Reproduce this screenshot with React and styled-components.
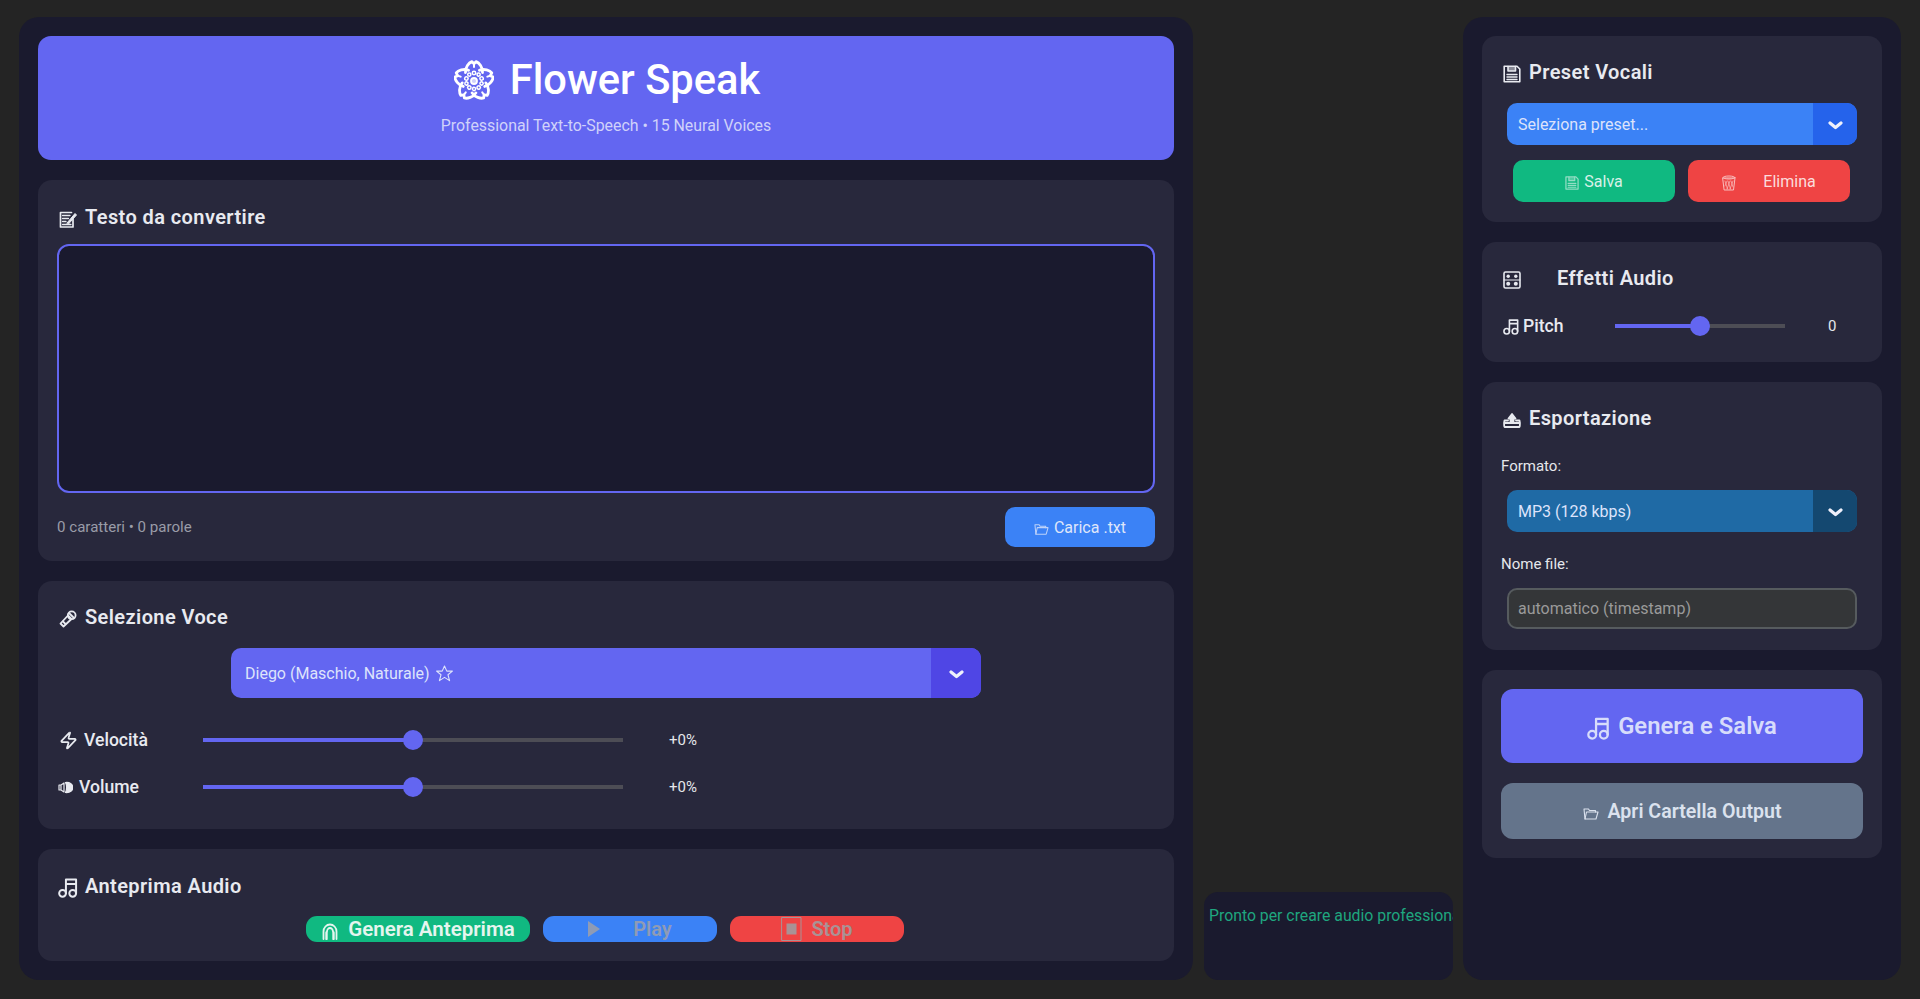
import React from "react";
import styled, { createGlobalStyle } from "styled-components";

const GlobalStyle = createGlobalStyle`
  html, body {
    margin: 0;
    height: 100%;
    background: #242424;
    font-family: Roboto, "Liberation Sans", sans-serif;
    color: #e5e7eb;
  }
  * { box-sizing: border-box; }
`;

const Page = styled.div`
  display: flex;
  height: 999px;
  padding: 17px 19px 19px;
  overflow: hidden;
`;

const Panel = styled.div`
  display: flex;
  flex-direction: column;
  gap: 20px;
  width: ${(p) => p.$width}px;
  padding: 19px;
  background: #1a1a2e;
  border-radius: 20px;
`;

const StatusPanel = styled.div`
  align-self: flex-end;
  width: 249px;
  height: 88px;
  margin: 0 10px 0 11px;
  padding: 13px 0 0 5px;
  background: #1a1a2e;
  border-radius: 14px;
  color: #1fa67f;
  font-size: 15.8px;
  line-height: 22px;
  white-space: nowrap;
  overflow: hidden;
`;

const Hero = styled.div`
  display: flex;
  flex-direction: column;
  align-items: center;
  height: 124px;
  padding-top: 20px;
  background: #6366f1;
  border-radius: 13px;
`;

const HeroTitle = styled.h1`
  display: flex;
  align-items: center;
  gap: 16px;
  margin: 0;
  height: 46px;
  padding-left: 2px;
  color: #fff;
  font-size: 41.6px;
  font-weight: 500;
  svg { margin-top: 2px; }
`;

const HeroSub = styled.div`
  margin-top: 13px;
  color: #d0d2fa;
  font-size: 15.9px;
  line-height: 22px;
`;

const Card = styled.section`
  display: flex;
  flex-direction: column;
  padding: ${(p) => p.$pad || "23px 19px 20px"};
  background: #28283c;
  border-radius: 14px;
`;

const CardTitle = styled.h2`
  display: flex;
  align-items: center;
  gap: ${(p) => p.$gap || 8}px;
  height: 26px;
  margin: 0;
  padding-left: ${(p) => p.$inset ?? 2}px;
  color: #e8eaf0;
  font-size: 20px;
  font-weight: 600;
  letter-spacing: 0.4px;
  svg { flex: none; margin-top: 3px; }
`;

const TextArea = styled.textarea`
  height: 249px;
  margin-top: 14px;
  background: #1a1a2e;
  border: 2px solid #6366f1;
  border-radius: 12px;
  color: #e5e7eb;
  font: 16px Roboto, sans-serif;
  outline: none;
  resize: none;
`;

const FooterRow = styled.div`
  display: flex;
  align-items: center;
  justify-content: space-between;
  margin-top: 14px;
`;

const Counter = styled.span`
  color: #9a9ca8;
  font-size: 15.1px;
`;

const Button = styled.button`
  display: flex;
  align-items: center;
  justify-content: center;
  gap: ${(p) => p.$gap || 5}px;
  width: ${(p) => (p.$width ? `${p.$width}px` : "100%")};
  height: ${(p) => p.$height || 42}px;
  padding: 0;
  background: ${(p) => p.$bg};
  border: none;
  border-radius: ${(p) => p.$radius || 10}px;
  color: ${(p) => p.$color || "#dfe6fa"};
  font-family: inherit;
  font-size: ${(p) => p.$size || 16}px;
  font-weight: ${(p) => p.$weight || 400};
  flex: none;
  svg { opacity: ${(p) => p.$iconFade || 1}; margin-top: ${(p) => p.$iconDrop || 0}px; }
`;

const SelectBox = styled.div`
  display: flex;
  align-items: stretch;
  width: ${(p) => p.$width}px;
  height: ${(p) => p.$height || 42}px;
  margin: ${(p) => p.$margin || "0"};
  background: ${(p) => p.$bg};
  border-radius: 10px;
  overflow: hidden;
  color: #dde3fb;
  font-size: 16px;
`;

const SelectLabel = styled.div`
  display: flex;
  align-items: center;
  gap: 5px;
  flex: 1;
  padding-left: ${(p) => p.$pad || 11}px;
`;

const SelectArrow = styled.div`
  display: flex;
  align-items: center;
  justify-content: center;
  width: ${(p) => p.$height || 44}px;
  padding-top: 2px;
  background: ${(p) => p.$bg};
  color: #eef0fb;
`;

const SliderRow = styled.div`
  display: flex;
  align-items: center;
  height: 30px;
  margin-top: ${(p) => p.$top}px;
`;

const SliderLabel = styled.div`
  display: flex;
  align-items: center;
  gap: ${(p) => p.$gap || 6}px;
  width: ${(p) => p.$width}px;
  padding-left: ${(p) => p.$inset ?? 2}px;
  color: #e8eaf0;
  font-size: 17.6px;
  font-weight: 500;
`;

const Track = styled.div`
  position: relative;
  width: ${(p) => p.$width}px;
  height: 4px;
  background: #4d4d55;
`;

const TrackFill = styled.div`
  height: 100%;
  background: #6366f1;
`;

const Thumb = styled.div`
  position: absolute;
  top: -8px;
  width: 20px;
  height: 20px;
  margin-left: -10px;
  background: #6366f1;
  border-radius: 50%;
`;

const SliderValue = styled.div`
  margin-left: ${(p) => p.$left}px;
  color: #e5e7eb;
  font-size: 15px;
`;

const PreviewRow = styled.div`
  display: flex;
  justify-content: center;
  gap: 13px;
  margin: 17px 0 0 -2px;
`;

const ButtonRow = styled.div`
  display: flex;
  gap: 13px;
  margin-top: 15px;
  padding-left: 12px;
`;

const FieldLabel = styled.div`
  height: 20px;
  margin-top: ${(p) => p.$top}px;
  color: #e5e7eb;
  font-size: 15px;
  line-height: 20px;
`;

const TextInput = styled.input`
  width: 350px;
  height: 41px;
  margin: 14px 0 0 6px;
  padding: 0 9px;
  background: #343638;
  border: 2px solid #565b5e;
  border-radius: 10px;
  font: 16px Roboto, sans-serif;
  outline: none;
  &::placeholder { color: #9a9a9a; opacity: 1; }
`;

const ActionStack = styled.div`
  display: flex;
  flex-direction: column;
  gap: 20px;
`;

const Svg = ({ size = 18, h, vb = "0 0 18 18", sw = 1.5, children }) => (
  <svg
    width={size}
    height={h || size}
    viewBox={vb}
    fill="none"
    stroke="currentColor"
    strokeWidth={sw}
    strokeLinecap="round"
    strokeLinejoin="round"
  >
    {children}
  </svg>
);

const FlowerIcon = () => (
  <Svg size={40} vb="0 0 40 40" sw={2.8}>
    {[0, 72, 144, 216, 288].map((a) => (
      <g key={a} transform={`rotate(${a} 20 21)`}>
        <path d="M11.5 12.5C11 7.5 15 2.5 17.8 1.6L20 3.8 22.2 1.6C25 2.5 29 7.5 28.5 12.5" />
        <circle cx="20" cy="13" r="1.7" strokeWidth="1.5" />
        <circle cx="15.3" cy="14.6" r="1.6" strokeWidth="1.5" />
        <path d="M20 3.8V7" strokeWidth="2" />
      </g>
    ))}
    <circle cx="20" cy="21" r="3" fill="currentColor" fillOpacity="0.7" strokeWidth="1.8" />
  </Svg>
);

const MemoIcon = () => (
  <Svg sw={1.7}>
    <path d="M14 9V17H1.5V2.5H12.5" />
    <path d="M3.5 5.5H11M3.5 8.5H9.5M3.5 11.5H7M3.5 14.5H12" strokeWidth="1.3" />
    <path d="M8 13L16 3.5L17.5 5L9.5 14Z" fill="currentColor" strokeWidth="1" />
  </Svg>
);

const MicIcon = () => (
  <Svg sw={1.8}>
    <path d="M1.5 13.5L9 5.5L12.5 9L4.5 16.5Z" />
    <circle cx="12.7" cy="5.3" r="3.9" />
    <path d="M10.5 3.5L14.5 7.5M4 11.5L6.5 14" />
  </Svg>
);

const ZapIcon = () => (
  <Svg size={19} vb="0 0 24 24" sw={2.2}>
    <path d="M4 14a1 1 0 0 1-.78-1.63l9.9-10.2a.5.5 0 0 1 .86.46l-1.92 6.02A1 1 0 0 0 13 10h7a1 1 0 0 1 .78 1.63l-9.9 10.2a.5.5 0 0 1-.86-.46l1.92-6.02A1 1 0 0 0 11 14z" />
  </Svg>
);

const SpeakerIcon = () => (
  <Svg size={15} vb="0 0 15 15" sw={1.2}>
    <path d="M1 5V10H3V5ZM3 5L6 3V12L3 10" />
    <path d="M7.5 2.5C12 2 15 4.5 14.5 7.5C15 10.5 12 13 7.5 12.5C9 10 9 5 7.5 2.5Z" fill="currentColor" />
  </Svg>
);

const NotesIcon = ({ size = 18 }) => (
  <Svg size={size} sw={1.7}>
    <circle cx="3.9" cy="14" r="2.9" />
    <circle cx="12.6" cy="14" r="2.9" />
    <path d="M6.8 14V2.2H15.5V14M6.8 6H15.5" />
  </Svg>
);

const FloppyIcon = ({ size = 18 }) => (
  <Svg size={size} sw={1.6}>
    <path d="M1.2 1.2H14L16.8 4V16.8H1.2Z" />
    <path d="M5 1.5V6H12.5V1.5" fill="currentColor" fillOpacity="0.5" />
    <path d="M4 9.5H14M4 12H14M4 14.5H14" strokeWidth="1.4" />
  </Svg>
);

const MixerIcon = () => (
  <Svg sw={1.6}>
    <rect x="1" y="1" width="16" height="16" rx="1.5" />
    <path d="M1 9H17" strokeWidth="1" />
    <circle cx="5.2" cy="5.2" r="1.7" fill="currentColor" stroke="none" />
    <circle cx="12.8" cy="5.2" r="1.7" fill="currentColor" stroke="none" />
    <circle cx="5.2" cy="12.8" r="2" fill="currentColor" stroke="none" />
    <circle cx="12.8" cy="12.8" r="2" fill="currentColor" stroke="none" />
  </Svg>
);

const ExportIcon = () => (
  <Svg sw={1.8}>
    <path d="M5 9.5H1.5C1 11 1 16 1.5 16H16.5C17 16 17 11 16.5 9.5H13" />
    <path d="M1.5 12H16.5" />
    <path d="M5.5 7.5L9 3L12.5 7.5H10.5V11H7.5V7.5Z" fill="currentColor" />
  </Svg>
);

const FolderIcon = ({ size = 15 }) => (
  <Svg size={size} vb="0 0 16 14" h={(size * 14) / 16} sw={1.1}>
    <path d="M2 13L1 3H5.5L6.5 4.5H12.5V6" />
    <path d="M2 13H13L15 6H3.5Z" />
  </Svg>
);

const HeadphonesIcon = () => (
  <Svg sw={1.8}>
    <path d="M2.5 17V9.5C2.5 5.5 5.5 2.5 9 2.5C12.5 2.5 15.5 5.5 15.5 9.5V17" />
    <path d="M5.5 17V10.5M12.5 17V10.5" strokeWidth="2.4" />
    <path d="M6 9.5C6 7.5 7.5 6 9 6C10.5 6 12 7.5 12 9.5" />
  </Svg>
);

const TrashIcon = () => (
  <Svg size={14} vb="0 0 14 16" h={16} sw={1}>
    <path d="M1 3H13L11.5 15H2.5Z" />
    <ellipse cx="7" cy="2.5" rx="6" ry="1.5" />
    <path d="M3 6L5.5 14M6 6L8.5 14M9 6L11 12M11 6L8 14M8 6L5 14M5 6L3 11" strokeWidth="0.7" />
  </Svg>
);

const StarIcon = () => (
  <Svg vb="0 0 24 24" size={19} sw={1.4}>
    <path d="M12 2.5L14.9 9H22L16.4 13.6L18.4 21L12 16.9L5.6 21L7.6 13.6L2 9H9.1Z" />
  </Svg>
);

const Chevron = () => (
  <Svg size={15} h={9} vb="0 0 15 9" sw={3.2}>
    <path d="M2 2L7.5 6.5L13 2" />
  </Svg>
);

const PlayIcon = () => (
  <svg width="12" height="16" viewBox="0 0 12 16">
    <path d="M0 0L12 8L0 16Z" fill="currentColor" />
  </svg>
);

const StopIcon = () => (
  <Svg size={21} h={24} vb="0 0 21 24" sw={1}>
    <rect x="1" y="0.5" width="19" height="23" />
    <rect x="5.5" y="6.5" width="10" height="11" fill="currentColor" stroke="none" />
  </Svg>
);

const Slider = ({ width, pct }) => (
  <Track $width={width}>
    <TrackFill style={{ width: `${pct}%` }} />
    <Thumb style={{ left: `${pct}%` }} />
  </Track>
);

const Select = ({ width, height, bg, arrowBg, margin, pad, children }) => (
  <SelectBox $width={width} $height={height} $bg={bg} $margin={margin}>
    <SelectLabel $pad={pad}>{children}</SelectLabel>
    <SelectArrow $bg={arrowBg} $height={height}>
      <Chevron />
    </SelectArrow>
  </SelectBox>
);

export default function App() {
  return (
    <Page>
      <GlobalStyle />
      <Panel $width={1174}>
        <Hero>
          <HeroTitle>
            <FlowerIcon />
            Flower Speak
          </HeroTitle>
          <HeroSub>Professional Text-to-Speech • 15 Neural Voices</HeroSub>
        </Hero>

        <Card $pad="24px 19px 14px">
          <CardTitle>
            <MemoIcon />
            Testo da convertire
          </CardTitle>
          <TextArea />
          <FooterRow>
            <Counter>0 caratteri • 0 parole</Counter>
            <Button $bg="#3b82f6" $width={150} $height={40} $iconFade={0.8} $iconDrop={3}>
              <FolderIcon />
              Carica .txt
            </Button>
          </FooterRow>
        </Card>

        <Card $pad="23px 19px 27px">
          <CardTitle>
            <MicIcon />
            Selezione Voce
          </CardTitle>
          <Select
            width={750}
            height={50}
            bg="#6366f1"
            arrowBg="#4f46e5"
            margin="18px auto 0"
            pad={14}
          >
            Diego (Maschio, Naturale)
            <StarIcon />
          </Select>
          <SliderRow $top={27}>
            <SliderLabel $width={146}>
              <ZapIcon />
              Velocità
            </SliderLabel>
            <Slider width={420} pct={50} />
            <SliderValue $left={46}>+0%</SliderValue>
          </SliderRow>
          <SliderRow $top={17}>
            <SliderLabel $width={146} $inset={1}>
              <SpeakerIcon />
              Volume
            </SliderLabel>
            <Slider width={420} pct={50} />
            <SliderValue $left={46}>+0%</SliderValue>
          </SliderRow>
        </Card>

        <Card $pad="24px 19px 19px">
          <CardTitle $inset={1} $gap={6}>
            <NotesIcon size={21} />
            Anteprima Audio
          </CardTitle>
          <PreviewRow>
            <Button $bg="#10b981" $width={224} $height={26} $gap={9} $size={20.5} $weight={600} $color="#e5f5ef" $radius={11} $iconDrop={4}>
              <HeadphonesIcon />
              Genera Anteprima
            </Button>
            <Button $bg="#3b82f6" $width={174} $height={26} $gap={33} $size={20} $weight={600} $color="#8f9bb5" $radius={11}>
              <PlayIcon />
              Play
            </Button>
            <Button $bg="#ef4444" $width={174} $height={26} $gap={9} $size={20} $weight={600} $color="#a99295" $radius={11}>
              <StopIcon />
              Stop
            </Button>
          </PreviewRow>
        </Card>
      </Panel>

      <StatusPanel>Pronto per creare audio professionale</StatusPanel>

      <Panel $width={438}>
        <Card>
          <CardTitle>
            <FloppyIcon />
            Preset Vocali
          </CardTitle>
          <Select width={350} bg="#3b82f6" arrowBg="#2563eb" margin="18px 0 0 6px">
            Seleziona preset...
          </Select>
          <ButtonRow>
            <Button $bg="#10b981" $width={162} $color="#d8f1e8" $iconFade={0.65} $iconDrop={3}>
              <FloppyIcon size={14} />
              Salva
            </Button>
            <Button $bg="#ef4444" $width={162} $gap={27} $color="#fbdcdc" $iconFade={0.8} $iconDrop={3}>
              <TrashIcon />
              Elimina
            </Button>
          </ButtonRow>
        </Card>

        <Card $pad="23px 19px 21px">
          <CardTitle $gap={36}>
            <MixerIcon />
            Effetti Audio
          </CardTitle>
          <SliderRow $top={20}>
            <SliderLabel $width={114} $gap={3}>
              <NotesIcon size={17} />
              Pitch
            </SliderLabel>
            <Slider width={170} pct={50} />
            <SliderValue $left={43}>0</SliderValue>
          </SliderRow>
        </Card>

        <Card $pad="23px 19px 21px">
          <CardTitle>
            <ExportIcon />
            Esportazione
          </CardTitle>
          <FieldLabel $top={25}>Formato:</FieldLabel>
          <Select width={350} bg="#1f6aa5" arrowBg="#144870" margin="14px 0 0 6px">
            MP3 (128 kbps)
          </Select>
          <FieldLabel $top={22}>Nome file:</FieldLabel>
          <TextInput placeholder="automatico (timestamp)" />
        </Card>

        <Card $pad="19px">
          <ActionStack>
            <Button $bg="#6366f1" $height={74} $gap={7} $size={23.8} $weight={600} $color="#d7dcfb" $radius={12} $iconDrop={3}>
              <NotesIcon size={24} />
              Genera e Salva
            </Button>
            <Button $bg="#64748b" $height={56} $gap={9} $size={19.6} $weight={600} $color="#dbe2ee" $radius={12} $iconDrop={3}>
              <FolderIcon size={16} />
              Apri Cartella Output
            </Button>
          </ActionStack>
        </Card>
      </Panel>
    </Page>
  );
}
